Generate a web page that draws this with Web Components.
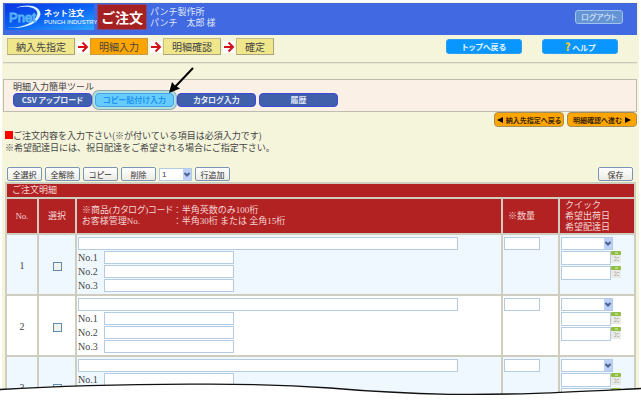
<!DOCTYPE html>
<html lang="ja">
<head>
<meta charset="utf-8">
<meta name="viewport" content="width=device-width, initial-scale=1">
<title>ご注文 - 明細入力</title>
<style>
  html, body { margin: 0; height: 100%; background: #fff; }
  body {
    color: #444;
    font: 9px/12px "Noto Sans CJK JP", sans-serif;
  }
</style>
</head>
<body>
<order-page>
  <site-header slot="header" company="パンチ製作所" user="パンチ　太郎 様"></site-header>
  <step-flow slot="steps" steps="納入先指定,明細入力,明細確認,確定" current="1"></step-flow>
  <tool-panel slot="tools" heading="明細入力簡単ツール">
    <pill-button>CSV アップロード</pill-button>
    <pill-button active>コピー貼付け入力</pill-button>
    <pill-button>カタログ入力</pill-button>
    <pill-button>履歴</pill-button>
  </tool-panel>
  <page-nav slot="nav"></page-nav>
  <order-notice slot="notice"></order-notice>
  <row-toolbar slot="toolbar"></row-toolbar>
  <order-table slot="table" rows="3"></order-table>
</order-page>

<script>
// 影子节点的公共写法
class BaseElement extends HTMLElement {
  constructor() {
    super();
    this.attachShadow({ mode: "open" });
  }

  connectedCallback() {
    this.shadowRoot.innerHTML = `
      <style>
        :host, *, *::before, *::after { box-sizing: border-box; }
        button { margin: 0; font: inherit; font-feature-settings: "palt"; white-space: nowrap; }
        ${this.styles()}
      </style>
      ${this.markup()}
    `;
  }

  styles() { return ""; }
  markup() { return ""; }
}

// 页面框架，底部为撕纸边缘
class OrderPage extends BaseElement {
  styles() {
    return `
      :host { display: block; position: relative; height: 100vh; overflow: hidden; background: #fff; }
      main { min-height: 100%; margin: 2px 2px 0; padding: 1px 2px 0 1px; background: #f5f5dc; }
      .rule { height: 2px; margin: 0; border: 0; border-top: 1px solid #c9c7b8; border-bottom: 1px solid #e8e6d4; }
      .steps { padding: 3px 0 7px; }
      .tools { padding-top: 15px; }
      .table { padding: 1px 1px 0 2px; }
      .edge { position: absolute; left: 0; bottom: 0; width: 100%; height: 24px; }
      .pointer { position: absolute; left: 166px; top: 66px; }
    `;
  }

  markup() {
    return `
      <main>
        <slot name="header"></slot>
        <div class="steps"><slot name="steps"></slot></div>
        <hr class="rule">
        <div class="tools"><slot name="tools"></slot></div>
        <slot name="nav"></slot>
        <slot name="notice"></slot>
        <slot name="toolbar"></slot>
        <div class="table"><slot name="table"></slot></div>
      </main>
      <svg class="pointer" width="30" height="30" viewBox="0 0 30 30" aria-hidden="true">
        <path d="M27 2 L9 21" stroke="#000" stroke-width="2"/>
        <path d="M3 27 L6 16 L9 19.500 L14 22.500 Z" fill="#000"/>
      </svg>
      <svg class="edge" viewBox="0 0 641 24" preserveAspectRatio="none" aria-hidden="true">
        <path d="M0 8.500 C60 5 120 3.500 190 3.200 C250 2.600 285 4 330 7 C370 10.500 410 12.500 450 13.300 C520 14 570 11 641 7.500 V24 H0 Z" fill="#fff"/>
        <path d="M0 8.500 C60 5 120 3.500 190 3.200 C250 2.600 285 4 330 7 C370 10.500 410 12.500 450 13.300 C520 14 570 11 641 7.500" fill="none" stroke="#111" stroke-width="1.300"/>
      </svg>
    `;
  }
}

class SiteHeader extends BaseElement {
  styles() {
    return `
      :host {
        display: flex; align-items: center; gap: 3px; height: 32px; padding: 0 14px 4px 2px;
        background: #4169e1; color: #dfe6fb;
        line-height: 11px;
      }
      .logo {
        display: flex; align-items: center; gap: 1px; width: 89px; height: 26px; padding-left: 1px;
        background: linear-gradient(165deg, #0a35e0, #0a62f4 50%, #2fa8ff);
        color: #fff;
      }
      .logo svg { flex: none; }
      .logo div { font-size: 8px; font-weight: bold; white-space: nowrap; }
      .logo small { display: block; font: 6px/9px "Liberation Sans", sans-serif; }
      h1 {
        margin: 0; padding: 0 3px; border: 1px solid #7d4a86;
        background: #a52222; color: #fff; font-size: 14px; line-height: 24px; white-space: nowrap;
      }
      p { flex: 1; margin: 0; white-space: pre; }
      button {
        height: 14px; width: 48px; padding: 0; border: 1px solid #9fc3f0; border-radius: 3px;
        background: #6494d4; color: #e6f0ff; font-size: 8px; line-height: 12px;
      }
    `;
  }

  markup() {
    return `
      <div class="logo">
        <svg width="37" height="24" viewBox="0 0 37 24" aria-hidden="true">
          <path d="M10 3 C24 -3 37 3 34 11 C31 20 14 25 1 22 C14 24 29 18 31 10 C33 3 22 0 10 3Z" fill="#d9f3ff"/>
          <text x="3" y="17" font-family="Liberation Sans, sans-serif" font-size="13" fill="none" stroke="#58b4f8" stroke-width="1">Pnet</text>
        </svg>
        <div>ネット注文<small>PUNCH INDUSTRY</small></div>
      </div>
      <h1>ご注文</h1>
      <p>${this.getAttribute("company")}\n${this.getAttribute("user")}</p>
      <button type="button">ログアウト</button>
    `;
  }
}

// 步骤导航
class StepFlow extends BaseElement {
  styles() {
    return `
      :host { display: flex; align-items: center; padding: 0 19px 0 4px; }
      ol { display: flex; gap: 2px; flex: 1; margin: 0; padding: 0; list-style: none; font-size: 10px; }
      li { display: flex; align-items: center; gap: 1px; }
      span {
        padding: 0 8px; border: 1px solid #c5bd84; border-right-color: #a9a27a; border-bottom-color: #a9a27a;
        background: #f0e68c; line-height: 15px; white-space: nowrap;
      }
      .current span { background: #ffa500; border-color: #c99a4a; }
      svg { background: #fff; }
      .links { display: flex; gap: 20px; }
      button {
        width: 76px; height: 15px; padding: 0; border: 1px solid #2a9dec; border-radius: 3px;
        background: #0a96ff; color: #e0f4ff; font-size: 8px; font-weight: bold; line-height: 12px;
      }
      b { color: #f2cf24; font-size: 11px; }
    `;
  }

  markup() {
    const current = Number(this.getAttribute("current"));
    const arrow = `
      <svg width="12" height="12" viewBox="0 0 12 12" aria-hidden="true">
        <path d="M1 6 H10 M5.500 1.500 L10 6 L5.500 10.500" fill="none" stroke="#d4101c" stroke-width="2"/>
      </svg>`;
    const items = this.getAttribute("steps").split(",").map((step, i) => `
      <li class="${i === current ? "current" : ""}">${i ? arrow : ""}<span>${step}</span></li>`);
    return `
      <ol>${items.join("")}</ol>
      <div class="links">
        <button type="button">トップへ戻る</button>
        <button type="button"><b>?</b> ヘルプ</button>
      </div>
    `;
  }
}

class ToolPanel extends BaseElement {
  styles() {
    return `
      :host { display: block; padding: 1px 9px 4px; border: 1px solid #bdbbb2; background: #faf0e6; }
      h2 { margin: 0; font-size: inherit; font-weight: normal; line-height: 12px; }
      div { display: flex; gap: 3px; }
    `;
  }

  markup() {
    return `<h2>${this.getAttribute("heading")}</h2><div><slot></slot></div>`;
  }
}

class PillButton extends BaseElement {
  styles() {
    return `
      :host { display: block; width: 79px; }
      button {
        display: block; width: 100%; height: 14px; padding: 0; border: 1px solid #3b47d8; border-radius: 4px;
        background: #4060ac; color: #e4eaf8; font-size: 8px; font-weight: bold; line-height: 12px;
      }
      :host([active]) button {
        border-color: #4a9ef0; background: #68ccfa; color: #1e94f4;
        box-shadow: 0 0 0 2px #aee2e2, 0 0 0 3px #8fa9a8;
      }
    `;
  }

  markup() {
    return `<button type="button"><slot></slot></button>`;
  }
}

class PageNav extends BaseElement {
  styles() {
    return `
      :host { display: flex; justify-content: flex-end; gap: 3px; }
      button {
        display: flex; align-items: center; justify-content: center; gap: 2px;
        width: 70px; height: 15px; padding: 0; border: 1px solid #a58d5a; border-radius: 4px;
        background: #ffa500; color: #3c2600; font-size: 7px; font-weight: bold; line-height: 12px;
      }
      svg { flex: none; }
    `;
  }

  markup() {
    return `
      <button type="button">
        <svg width="7" height="6" viewBox="0 0 7 6" aria-hidden="true"><path d="M0 3 L6 0 V6Z"/></svg>
        納入先指定へ戻る
      </button>
      <button type="button">
        明細確認へ進む
        <svg width="7" height="6" viewBox="0 0 7 6" aria-hidden="true"><path d="M7 3 L1 0 V6Z"/></svg>
      </button>
    `;
  }
}

class OrderNotice extends BaseElement {
  styles() {
    return `
      :host { display: block; padding: 3px 2px 0; }
      p { margin: 0; }
      i { display: inline-block; width: 8px; height: 8px; background: #f00; }
    `;
  }

  markup() {
    return `
      <p><i></i>ご注文内容を入力下さい(※が付いている項目は必須入力です)</p>
      <p>※希望配達日には、祝日配達をご希望される場合にご指定下さい。</p>
    `;
  }
}

// 下拉框，自绘箭头
class SelectBox extends BaseElement {
  styles() {
    return `
      :host { display: grid; height: 13px; }
      select, svg { grid-area: 1 / 1; }
      select {
        appearance: none; width: 100%; height: 100%; margin: 0; padding: 0 10px 0 2px;
        border: 1px solid #b4cbe2; border-radius: 0; background: #fff; color: #444;
        font: 8px/11px "Liberation Sans", sans-serif;
      }
      svg { place-self: center end; margin-right: 1px; pointer-events: none; }
    `;
  }

  markup() {
    const value = this.getAttribute("value") || "";
    return `
      <select aria-label="${this.getAttribute("label")}"><option>${value}</option></select>
      <svg width="8" height="11" viewBox="0 0 8 11" aria-hidden="true">
        <rect width="8" height="11" fill="#bdd0fa"/>
        <path d="M1.500 4 L4 6.500 L6.500 4" fill="none" stroke="#4a628c" stroke-width="2"/>
      </svg>
    `;
  }
}

class RowToolbar extends BaseElement {
  styles() {
    return `
      :host { display: flex; align-items: center; gap: 3px; padding: 13px 4px 0 4px; }
      button {
        width: 35px; height: 14px; padding: 0; border: 1px solid #7896b4; border-radius: 2px;
        background: linear-gradient(#fff, #ecebe4); color: #333; font-size: 8px; line-height: 11px;
      }
      select-box { width: 33px; }
      .save { margin-left: auto; }
    `;
  }

  markup() {
    return `
      <button type="button">全選択</button>
      <button type="button">全解除</button>
      <button type="button">コピー</button>
      <button type="button">削除</button>
      <select-box value="1" label="追加行数"></select-box>
      <button type="button">行追加</button>
      <button type="button" class="save">保存</button>
    `;
  }
}

// 日期输入框 + 日历图标
class DateField extends BaseElement {
  styles() {
    return `
      :host { display: flex; align-items: flex-start; }
      input { width: 50px; height: 14px; margin: 0; padding: 0 2px; border: 1px solid #b4cbe2; font-size: 9px; }
    `;
  }

  markup() {
    return `
      <input type="text" aria-label="${this.getAttribute("label")}">
      <svg width="10" height="12" viewBox="0 0 10 12" aria-hidden="true">
        <rect x="0" y="3" width="10" height="9" fill="#e9e9e6"/>
        <rect width="10" height="4" rx="1" fill="#8fbe42"/>
        <path d="M4 2 H7" stroke="#dff0c0"/>
        <path d="M3 6 H5 V9.500 H3 M6 6.500 H8 M6 9.500 H8" fill="none" stroke="#bcbcb8"/>
      </svg>
    `;
  }
}

// 订单明细表
class OrderTable extends BaseElement {
  styles() {
    return `
      :host { display: block; font-family: "Liberation Serif", "Noto Sans CJK JP", serif; }
      table { width: 100%; table-layout: fixed; border-spacing: 2px; background: #cfcdbf; }
      .no { width: 30px; }
      .pick { width: 36px; }
      .qty { width: 55px; }
      .date { width: 74px; }
      th { padding: 0 5px; background: #b22222; color: #f3d4d4; font-weight: normal; line-height: 11px; text-align: left; }
      .title th { height: 13px; line-height: 13px; }
      .head th { height: 34px; }
      .head .mid { padding: 0; text-align: center; }
      td { height: 59px; padding: 2px 1px 0; background: #fff; vertical-align: top; font-size: 10px; }
      tr:nth-child(odd) td { background: #f0f8ff; }
      td.mid { text-align: center; vertical-align: middle; }
      dl { display: grid; grid-template-columns: auto 1fr; margin: 0; }
      dt, dd { margin: 0; }
      dt { font-feature-settings: "palt"; }
      .stack, .lines { display: grid; gap: 1px; }
      .lines { grid-template-columns: 25px 1fr; align-items: center; }
      .full { grid-column: 1 / -1; width: 90%; }
      .sub { width: 130px; }
      input[type=text] { height: 13px; margin: 0; padding: 0 2px; border: 1px solid #b4cbe2; font-size: 9px; }
      input.num { display: block; width: 36px; }
      input[type=checkbox] {
        appearance: none; width: 9px; height: 9px; margin: 0; border: 1px solid #5f8ab2; background: #f2f2ec;
        vertical-align: middle;
      }
      select-box { width: 52px; }
    `;
  }

  row(n) {
    const lines = [1, 2, 3].map((k) => `
      <label for="r${n}-${k}">No.${k}</label><input class="sub" type="text" id="r${n}-${k}">`);
    return `
      <tr>
        <td class="mid">${n}</td>
        <td class="mid"><input type="checkbox" aria-label="選択 ${n}"></td>
        <td>
          <div class="lines">
            <input class="full" type="text" aria-label="商品コード ${n}">
            ${lines.join("")}
          </div>
        </td>
        <td><input class="num" type="text" aria-label="数量 ${n}"></td>
        <td>
          <div class="stack">
            <select-box label="クイック ${n}"></select-box>
            <date-field label="希望出荷日 ${n}"></date-field>
            <date-field label="希望配達日 ${n}"></date-field>
          </div>
        </td>
      </tr>
    `;
  }

  markup() {
    const count = Number(this.getAttribute("rows"));
    const rows = Array.from({ length: count }, (_, i) => this.row(i + 1));
    return `
      <table>
        <colgroup><col class="no"><col class="pick"><col><col class="qty"><col class="date"></colgroup>
        <thead>
          <tr class="title"><th colspan="5">ご注文明細</th></tr>
          <tr class="head">
            <th class="mid">No.</th>
            <th class="mid">選択</th>
            <th>
              <dl>
                <dt>※商品(カタログ)コード</dt><dd>：半角英数のみ100桁</dd>
                <dt>お客様管理No.</dt><dd>：半角30桁 または 全角15桁</dd>
              </dl>
            </th>
            <th>※数量</th>
            <th>クイック<br>希望出荷日<br>希望配達日</th>
          </tr>
        </thead>
        <tbody>${rows.join("")}</tbody>
      </table>
    `;
  }
}

customElements.define("select-box", SelectBox);
customElements.define("date-field", DateField);
customElements.define("pill-button", PillButton);
customElements.define("site-header", SiteHeader);
customElements.define("step-flow", StepFlow);
customElements.define("tool-panel", ToolPanel);
customElements.define("page-nav", PageNav);
customElements.define("order-notice", OrderNotice);
customElements.define("row-toolbar", RowToolbar);
customElements.define("order-table", OrderTable);
customElements.define("order-page", OrderPage);
</script>
</body>
</html>
